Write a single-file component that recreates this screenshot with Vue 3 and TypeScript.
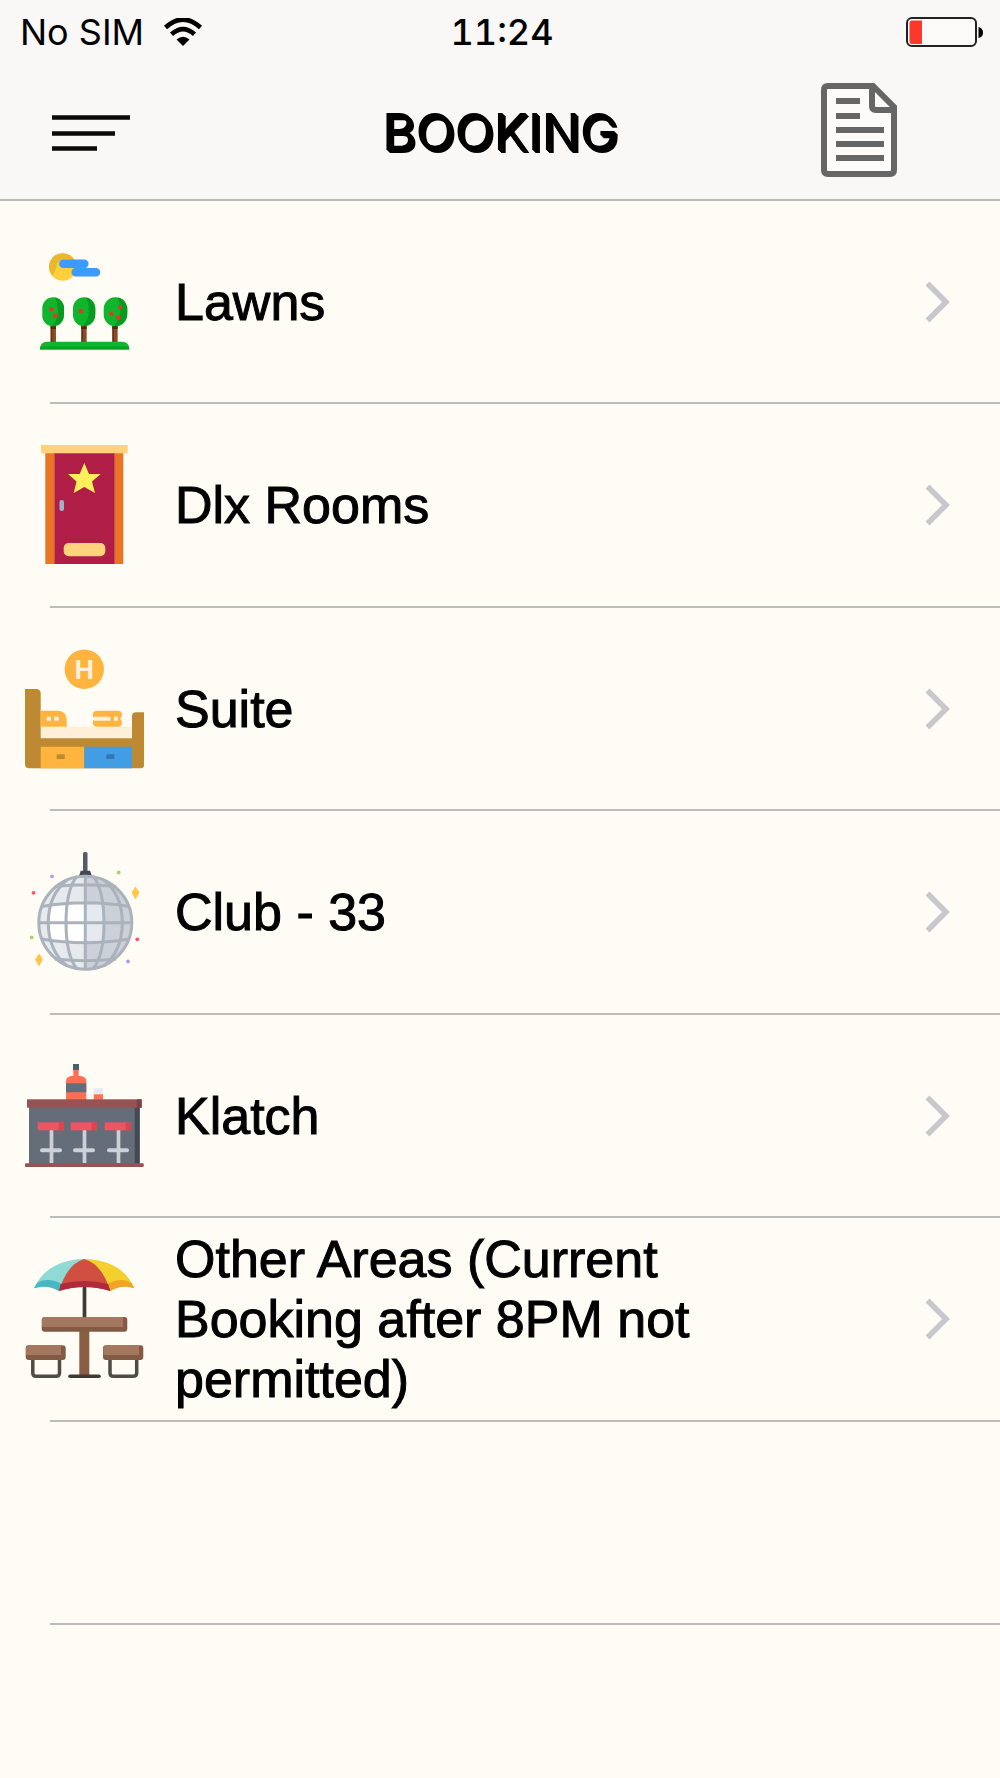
<script setup lang="ts">
interface Area {
  id: string
  label: string
}

const areas: Area[] = [
  { id: 'lawns', label: 'Lawns' },
  { id: 'rooms', label: 'Dlx Rooms' },
  { id: 'suite', label: 'Suite' },
  { id: 'club', label: 'Club - 33' },
  { id: 'klatch', label: 'Klatch' },
  { id: 'other', label: 'Other Areas (Current Booking after 8PM not permitted)' },
]

const stools: number[] = [0, 33, 67]
</script>

<template>
  <div class="screen">
    <header class="header">
      <div class="status">
        <div class="carrier">
          <span>No SIM</span>
          <svg class="wifi" viewBox="0 0 38 28" aria-hidden="true">
            <path d="M1.500 9.500Q19-6.500 36.500 9.500" fill="none" stroke="#000" stroke-width="4.600" />
            <path d="M7.500 16.300Q19 5.800 30.500 16.300" fill="none" stroke="#000" stroke-width="4.600" />
            <path d="M12.500 21.500Q19 16 25.500 21.500L19 28Z" />
          </svg>
        </div>
        <time class="clock">11:24</time>
        <svg class="battery" viewBox="0 0 78 30" aria-hidden="true">
          <rect x="1" y="1" width="69" height="28" rx="5" fill="#fcfbfa" stroke="#222" stroke-width="2" />
          <path d="M6 3.500H16V27H6Q3.500 27 3.500 24.500V6Q3.500 3.500 6 3.500Z" fill="#ff382d" />
          <path d="M72.500 10Q77 11 77 15.500T72.500 21Z" />
        </svg>
      </div>
      <nav class="nav">
        <button class="menu" type="button" aria-label="Menu">
          <svg class="menu-icon" viewBox="0 0 78 36">
            <path d="M0 2.500H78M0 18.500H63M0 33.500H45" stroke="#0a0a08" stroke-width="4.600" />
          </svg>
        </button>
        <h1 class="title">BOOKING</h1>
        <button class="document" type="button" aria-label="Booking details">
          <svg class="document-icon" viewBox="0 0 76 94">
            <path d="M3 7Q3 3 7 3H52L73 24V87Q73 91 69 91H7Q3 91 3 87Z" fill="#fcfbfa" stroke="#666" stroke-width="6" />
            <path d="M51 4V23Q51 27 55 27H73" fill="none" stroke="#666" stroke-width="6" />
            <path d="M15 18H39M15 33H39M15 47H63M15 61H63M15 75H63" stroke="#666" stroke-width="6" />
          </svg>
        </button>
      </nav>
    </header>

    <ul class="list">
      <li v-for="area in areas" :key="area.id" class="row">
        <a class="link" :href="`#${area.id}`">
          <svg class="picture" viewBox="0 0 120 120" aria-hidden="true">
            <g v-if="area.id === 'lawns'">
              <circle cx="37.700" cy="25" r="13.700" fill="#ffd039" />
              <path d="M37.700 11.300A13.700 13.700 0 0 0 27 33.500Q32 28 32 21Q38 14 50 19Q46 11.300 37.700 11.300Z" fill="#eab731" />
              <path d="M38.300 21.700H59.300M50.700 30.300H71" stroke="#3d9bff" stroke-width="8.600" stroke-linecap="round" />
              <path d="M48 22H62L60 30H52Z" fill="#3d9bff" />
              <path d="M28.300 80V101M59 80V101M90 80V101" stroke="#8b4a21" stroke-width="5.300" />
              <path d="M26.500 83V101M57.200 83V101M88.200 83V101" stroke="#633419" stroke-width="1.600" />
              <path d="M25.700 85.500H31M56.400 85.500H61.600M87.400 85.500H92.600" stroke="#4c2a10" stroke-width="3" />
              <rect x="17.300" y="55.300" width="21.700" height="29" rx="10.800" fill="#10b52b" />
              <rect x="48" y="55.300" width="22.300" height="29" rx="11" fill="#10b52b" />
              <rect x="78.700" y="55.300" width="23.600" height="29" rx="11.500" fill="#10b52b" />
              <path d="M30 55.500Q40 58 39 70Q39 83 27 84.200Q37 73 30 55.500ZM61 55.500Q71 58 70.300 70Q70 83 58 84.200Q68 73 61 55.500ZM93 55.500Q103 58 102.300 70Q102 83 89 84.200Q99 73 93 55.500Z" fill="#079921" />
              <g fill="#dc3b26">
                <circle cx="26.500" cy="67.300" r="2.200" /><circle cx="30.300" cy="74" r="2.400" />
                <circle cx="56" cy="69" r="2.300" /><circle cx="95" cy="65" r="2.200" />
                <circle cx="86.500" cy="72" r="2.200" /><circle cx="93.300" cy="76" r="2.400" />
              </g>
              <path d="M15 107.500Q15 99.700 22 99.700H97Q104.300 99.700 104.300 107.500Z" fill="#10b52b" />
              <path d="M15 107.500L15.500 104.500H103.700L104.300 107.500Z" fill="#08a124" />
            </g>

            <g v-else-if="area.id === 'rooms'">
              <rect x="20.300" y="7" width="78" height="112" fill="#ea7525" />
              <rect x="29.300" y="7" width="60.400" height="112" fill="#b01e48" />
              <path d="M29.300 9V119M89.700 9V119" stroke="#d05a58" stroke-width="1" />
              <rect x="16" y="0" width="86.700" height="8.300" fill="#ffd27c" />
              <path d="M59.300 18L64 29H75.700L67 36.500L70 48L59.300 42L48.700 48L51.500 36.500L43 29H54.700Z" fill="#fff05a" />
              <rect x="34.500" y="55" width="4.500" height="11" rx="2" fill="#9eb3c6" />
              <rect x="38.700" y="98" width="41.600" height="13.300" rx="5" fill="#ffd27c" />
            </g>

            <g v-else-if="area.id === 'suite'">
              <circle cx="59.300" cy="20.300" r="19.700" fill="#ffb440" />
              <text x="59.300" y="30" class="hotel-mark">H</text>
              <rect x="15" y="77.700" width="93" height="12" fill="#ffefd9" />
              <path d="M0 40H11Q15.700 40 15.700 44.500V89.300H107V67Q107 63.300 111 63.300H119V116Q119 119.300 116 119.300H4Q0 119.300 0 115Z" fill="#bd8932" />
              <path d="M15.700 97.700H59.300V119.300H15.700Z" fill="#ffb440" />
              <path d="M59.300 97.700H107V119.300H59.300Z" fill="#429de5" />
              <rect x="31.700" y="105.300" width="8" height="4.700" fill="#bd8932" />
              <rect x="81.300" y="105.300" width="8" height="4.700" fill="#3277b1" />
              <path d="M15.700 61.700H33Q41.700 61.700 41.700 72V77.700H15.700Z" fill="#ffb440" />
              <path d="M73 61.700H92Q97 61.700 97 65.500Q97 68.500 95 69.700Q97 71 97 73.500Q97 77.700 92 77.700H73Q67.700 77.700 67.700 73.500Q67.700 71 70 69.700Q67.700 68.500 67.700 65.500Q67.700 61.700 73 61.700Z" fill="#ffb440" />
              <path d="M21.700 69.800H26M29.300 69.800H33.700M69 69.800H85.500M89 69.800H92.800" stroke="#fff0dc" stroke-width="4" />
            </g>

            <g v-else-if="area.id === 'club'">
              <rect x="58" y="0" width="4.500" height="20" rx="1.500" fill="#545c67" />
              <path d="M55.700 18.700H65L67 24H54Z" fill="#434a54" />
              <circle cx="60.300" cy="70.700" r="47" fill="#e6e9ed" />
              <path d="M60.300 23.700A47 47 0 0 1 60.300 117.700V89.700H79V52H60.300Z" fill="#ccd1d9" />
              <path d="M24 53.500Q41 51 60.300 51V91Q41 91 24 88Z" fill="#fff" />
              <g fill="none" stroke="#aab2bc" stroke-width="3">
                <circle cx="60.300" cy="70.700" r="46.500" />
                <path d="M60.300 24V117M13 70.700H108M30 34.500Q60.300 31 91 34.500M17 54.500Q60.300 47 104 54.500M17 87Q60.300 94.500 104 87M30 107Q60.300 110.500 91 107" />
                <path d="M52 24Q41 38 41 70.700T52 117M68 24Q79 38 79 70.700T68 117M42 28Q23.300 43 23.300 70.700T42 114M79 28Q97.300 43 97.300 70.700T79 114" />
              </g>
              <path d="M110.500 34.500L114.500 40.500L110.500 47.500L106.500 40.500ZM14 101.500L18 107.500L14 114.500L10 107.500Z" fill="#ffc64a" />
              <g fill="#fb5265"><circle cx="8.500" cy="40.800" r="1.900" /><circle cx="112.300" cy="87.300" r="1.900" /></g>
              <g fill="#a6d46c"><circle cx="93.700" cy="20.500" r="1.900" /><circle cx="6.700" cy="85.500" r="1.900" /></g>
              <g fill="#b59ae9"><circle cx="27" cy="24.300" r="1.900" /><circle cx="103" cy="109.500" r="1.900" /></g>
            </g>

            <g v-else-if="area.id === 'klatch'">
              <path d="M48.300 13H53.700V19.700Q61.300 20 61.300 25V44H41V25Q41 20 48.300 19.700Z" fill="#ff7052" />
              <rect x="48" y="8" width="6" height="6" fill="#545c67" />
              <rect x="41" y="27.300" width="20.300" height="9" fill="#656d78" />
              <rect x="68.700" y="32.300" width="9.300" height="6.500" fill="#e6e9ed" />
              <rect x="68.700" y="38.300" width="9.300" height="5.500" fill="#ff7052" />
              <rect x="4" y="50" width="110.700" height="58" fill="#656d78" />
              <rect x="109.700" y="50" width="5" height="58" fill="#434a54" />
              <rect x="2" y="43.300" width="114.700" height="8.400" fill="#965353" />
              <rect x="111.700" y="43.300" width="5" height="8.400" fill="#7f4145" />
              <g v-for="x in stools" :key="x" :transform="`translate(${x} 0)`">
                <path d="M26.500 74V107" stroke="#ccd1d9" stroke-width="3.700" />
                <path d="M17 94.300H35" stroke="#ccd1d9" stroke-width="4" stroke-linecap="round" />
                <rect x="12.700" y="66.300" width="26.300" height="8" fill="#ed5564" />
                <rect x="33.700" y="66.300" width="5.300" height="8" fill="#da4453" />
              </g>
              <rect x="0" y="107.300" width="118.700" height="3.700" rx="1" fill="#965353" />
            </g>

            <g v-else>
              <path d="M59.500 26V60" stroke="#403a35" stroke-width="3.700" />
              <path d="M59.300 0Q22 1 9 29.300Q22 24 34 32L45 20Z" fill="#8fdad5" />
              <path d="M59.300 0Q97 1 109.500 29.300Q97 24 85.300 32L74 20Z" fill="#f4d02f" />
              <path d="M12.500 23.500L9 29.300Q22 25 34 32L36.500 25Q24 18 12.500 23.500Z" fill="#47b8c2" />
              <path d="M106 23.500L109.500 29.300Q97 25 85.300 32L82.500 25Q95 18 106 23.500Z" fill="#f3a426" />
              <path d="M59.300 0Q42 5 34 32Q59.300 24 85.300 32Q77 5 59.300 0Z" fill="#d14f40" />
              <path d="M35.700 25L34 32Q59.300 24 85.300 32L83 25Q59.300 19 35.700 25Z" fill="#b12a3b" />
              <rect x="54.300" y="70" width="10" height="47" fill="#895e45" />
              <rect x="16.700" y="58" width="85.600" height="14.700" rx="3" fill="#835a43" />
              <path d="M19 58H98V68H17V60Z" fill="#a3785f" />
              <path d="M7.800 100V114Q7.800 117.300 11 117.300H31Q34.500 117.300 34.500 114V100M85 100V114Q85 117.300 88.300 117.300H108Q111.700 117.300 111.700 114V100" fill="none" stroke="#504b43" stroke-width="3.500" />
              <path d="M45 117.300H74" stroke="#403a35" stroke-width="3.500" stroke-linecap="round" />
              <rect x="0.700" y="86.300" width="40" height="14.700" rx="3" fill="#835a43" />
              <rect x="78" y="86.300" width="40.300" height="14.700" rx="3" fill="#835a43" />
              <path d="M3 86.300H36V96H1V88ZM80 86.300H114V96H78.300V88Z" fill="#a3785f" />
            </g>
          </svg>
          <span class="label">{{ area.label }}</span>
          <svg class="chevron" viewBox="0 0 25 42" aria-hidden="true">
            <path d="M2.500 2.500L21 21L2.500 39.500" fill="none" stroke="#c7c7cc" stroke-width="5.500" />
          </svg>
        </a>
      </li>
      <li class="row" aria-hidden="true"></li>
    </ul>
  </div>
</template>

<style>
body {
  margin: 0;
  background: #fffcf5;
}
</style>

<style scoped>
.screen {
  display: flex;
  flex-direction: column;
  min-height: 100vh;
  color: #000;
  background: #fffcf5;
}

.header {
  font-family: Inter, Roboto, sans-serif;
  background: #f9f8f6;
  border-bottom: 2px solid #bbbab8;
}

.status,
.nav {
  display: grid;
  grid-template-columns: 1fr auto 1fr;
  align-items: center;
}

.status {
  height: 64px;
  padding: 0 16px 0 20px;
  font-size: 36px;
  line-height: 44px;
}

.carrier {
  display: flex;
  align-items: center;
  gap: 20px;
}

.wifi {
  width: 38px;
  height: 28px;
}

.clock {
  font-weight: 500;
  font-variant-numeric: tabular-nums;
}

.battery {
  width: 78px;
  height: 30px;
  justify-self: end;
}

.nav {
  height: 135px;
}

.menu,
.document {
  display: flex;
  padding: 0;
  border: 0;
  background: none;
  cursor: pointer;
}

.menu {
  margin-left: 52px;
  padding-top: 3px;
}

.menu-icon {
  width: 78px;
  height: 36px;
}

.document {
  justify-self: end;
  margin-right: 103px;
  padding-bottom: 4px;
}

.document-icon {
  width: 76px;
  height: 94px;
}

.title {
  margin: 0;
  font-size: 51px;
  font-weight: 400;
  line-height: 60px;
  text-shadow: 1px 1px #000, 2px 2px #000, 3px 3px #000;
}

.list {
  display: grid;
  flex: 1;
  grid-template-rows: repeat(7, 4fr) 3fr;
  margin: 0;
  padding: 0;
  list-style: none;
}

.row {
  background: linear-gradient(#bcbcbb, #bcbcbb) right bottom / calc(100% - 50px) 2px no-repeat;
}

.link {
  display: flex;
  align-items: center;
  height: 100%;
  padding: 0 50px 2px 25px;
  box-sizing: border-box;
  color: inherit;
  text-decoration: none;
}

.picture {
  flex: none;
  width: 120px;
  height: 120px;
}

.label {
  flex: 1;
  margin: 0 150px 0 30px;
  font-family: "Liberation Sans", Arial, sans-serif;
  font-size: 52px;
  line-height: 60px;
  -webkit-text-stroke: 1px #000;
}

.chevron {
  flex: none;
  width: 25px;
  height: 42px;
}

.hotel-mark {
  font: 700 27px "Liberation Sans", Arial, sans-serif;
  fill: #fff0dc;
  text-anchor: middle;
}
</style>
